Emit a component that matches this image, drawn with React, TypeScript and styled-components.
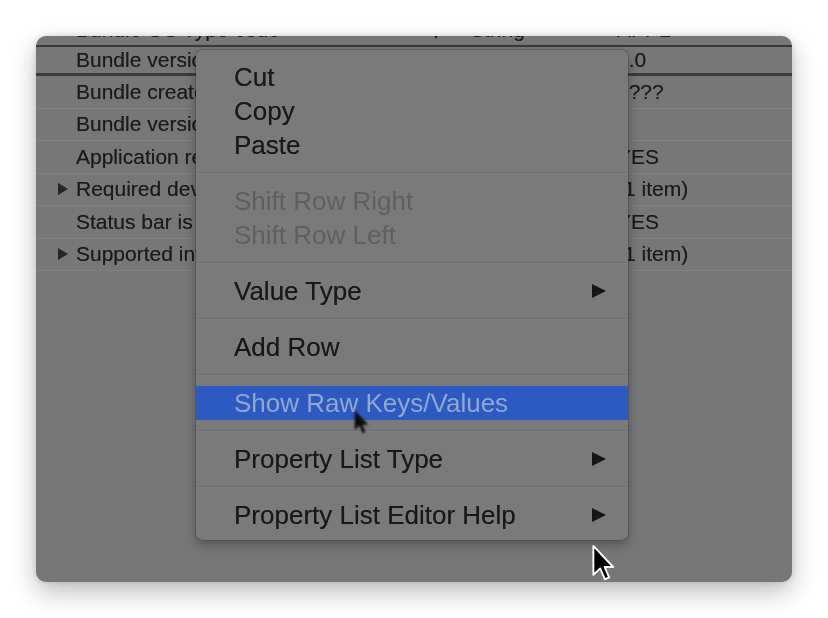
import React from "react";
import styled, { createGlobalStyle } from "styled-components";

const Global = createGlobalStyle`
  html, body { margin: 0; padding: 0; background: #ffffff; }
  body { font-family: "Liberation Sans", Arial, Helvetica, sans-serif; }
`;

const Page = styled.div`
  width: 828px;
  height: 618px;
  padding: 36px;
  box-sizing: border-box;
  background: #ffffff;
`;

const Card = styled.div`
  position: relative;
  width: 756px;
  height: 546px;
  background: #777777;
  border-radius: 10px;
  overflow: hidden;
  box-shadow: 0 10px 26px rgba(0, 0, 0, 0.26), 0 0 6px rgba(0, 0, 0, 0.12);
`;

const Table = styled.div`
  display: flex;
  flex-direction: column;
  margin-top: -21px;
  filter: blur(0.45px);
`;

type Variant = "partial" | "selected" | "normal";

const Row = styled.div<{ $variant: Variant }>`
  display: grid;
  grid-template-columns: 20px 355px 39px 147px 1fr;
  align-items: center;
  box-sizing: border-box;
  padding-left: 20px;
  font-size: 21px;
  line-height: 24px;
  color: #1a1a1a;
  text-shadow: 0 0 0.6px rgba(0, 0, 0, 0.5);
  white-space: nowrap;
  height: ${(p) => (p.$variant === "partial" ? "30px" : p.$variant === "selected" ? "31px" : "32.5px")};
  border-top: ${(p) => (p.$variant === "selected" ? "2px solid #3a3a3a" : "none")};
  border-bottom: ${(p) =>
    p.$variant === "selected" ? "3px solid #3c3c3c" : p.$variant === "normal" ? "1px solid #818181" : "none"};
`;

const Disclosure = styled.span`
  display: block;
  width: 0;
  height: 0;
  margin-left: 2px;
  border-left: 10px solid #262626;
  border-top: 6.5px solid transparent;
  border-bottom: 6.5px solid transparent;
`;

const Cell = styled.span`
  overflow: hidden;
`;

const Stepper = styled.span`
  display: flex;
  flex-direction: column;
  gap: 8px;
  margin-left: 2px;
`;

const Tri = styled.span<{ $up?: boolean }>`
  display: block;
  width: 0;
  height: 0;
  border-left: 3.5px solid transparent;
  border-right: 3.5px solid transparent;
  ${(p) => (p.$up ? "border-bottom: 5px solid #222;" : "border-top: 5px solid #222;")}
`;

const Menu = styled.div`
  position: absolute;
  left: 160px;
  top: 14px;
  width: 432px;
  box-sizing: border-box;
  padding: 10px 0 8px;
  background: #7a7a7a;
  border-radius: 7px;
  box-shadow: 0 4px 12px rgba(0, 0, 0, 0.32), 0 0 0 1px rgba(0, 0, 0, 0.14);
  font-size: 26px;
  filter: blur(0.45px);
`;

const Item = styled.div<{ $disabled?: boolean; $active?: boolean }>`
  display: flex;
  align-items: center;
  justify-content: space-between;
  height: 34px;
  padding: 0 22px 0 38px;
  white-space: nowrap;
  color: ${(p) => (p.$active ? "#91a8cc" : p.$disabled ? "#5f5f5f" : "#181818")};
  text-shadow: ${(p) => (p.$disabled || p.$active ? "none" : "0 0 0.6px rgba(0,0,0,0.5)")};
  background: ${(p) => (p.$active ? "#2d59c3" : "transparent")};
`;

const SubArrow = styled.span`
  display: block;
  width: 0;
  height: 0;
  border-left: 14px solid #161616;
  border-top: 7px solid transparent;
  border-bottom: 7px solid transparent;
`;

const Separator = styled.div`
  height: 22px;
  display: flex;
  align-items: center;
  &::after {
    content: "";
    flex: 1;
    border-top: 1px solid #6f6f6f;
    border-bottom: 1px solid #7f7f7f;
  }
`;

const Pointer = styled.svg<{ $x: number; $y: number; $blur?: number }>`
  position: absolute;
  left: ${(p) => p.$x}px;
  top: ${(p) => p.$y}px;
  filter: ${(p) => (p.$blur ? `blur(${p.$blur}px)` : "none")};
`;

type RowData = {
  key: string;
  type: string;
  value: string;
  variant: Variant;
  disclosure?: boolean;
  stepper?: boolean;
};

const rows: RowData[] = [
  { key: "Bundle OS Type code", type: "String", value: "APPL", variant: "partial", stepper: true },
  { key: "Bundle versions string, short", type: "String", value: "1.0", variant: "selected" },
  { key: "Bundle creator OS Type code", type: "String", value: "????", variant: "normal" },
  { key: "Bundle version", type: "String", value: "1", variant: "normal" },
  { key: "Application requires iPhone environment", type: "Boolean", value: "YES", variant: "normal" },
  { key: "Required device capabilities", type: "Array", value: "(1 item)", variant: "normal", disclosure: true },
  { key: "Status bar is initially hidden", type: "Boolean", value: "YES", variant: "normal" },
  { key: "Supported interface orientations", type: "Array", value: "(1 item)", variant: "normal", disclosure: true },
];

type MenuEntry =
  | { sep: true }
  | { sep?: false; label: string; disabled?: boolean; active?: boolean; sub?: boolean };

const menu: MenuEntry[] = [
  { label: "Cut" },
  { label: "Copy" },
  { label: "Paste" },
  { sep: true },
  { label: "Shift Row Right", disabled: true },
  { label: "Shift Row Left", disabled: true },
  { sep: true },
  { label: "Value Type", sub: true },
  { sep: true },
  { label: "Add Row" },
  { sep: true },
  { label: "Show Raw Keys/Values", active: true },
  { sep: true },
  { label: "Property List Type", sub: true },
  { sep: true },
  { label: "Property List Editor Help", sub: true },
];

const ArrowPath = "M1.2 1 L1.2 16.2 L4.8 12.9 L7.3 18.6 L9.5 17.6 L7.1 12.1 L11.6 12.1 Z";

export default function App() {
  return (
    <Page>
      <Global />
      <Card>
        <Table>
          {rows.map((r, i) => (
            <Row key={i} $variant={r.variant}>
              <span>{r.disclosure ? <Disclosure /> : null}</span>
              <Cell>{r.key}</Cell>
              <span>
                {r.stepper ? (
                  <Stepper>
                    <Tri $up />
                    <Tri />
                  </Stepper>
                ) : null}
              </span>
              <Cell>{r.type}</Cell>
              <Cell>{r.value}</Cell>
            </Row>
          ))}
        </Table>

        <Menu>
          {menu.map((m, i) =>
            m.sep ? (
              <Separator key={i} />
            ) : (
              <Item key={i} $disabled={m.disabled} $active={m.active}>
                <span>{m.label}</span>
                {m.sub ? <SubArrow /> : null}
              </Item>
            )
          )}
        </Menu>

        <Pointer $x={317} $y={373} $blur={1.2} width="16" height="26" viewBox="0 0 12 20">
          <path d={ArrowPath} fill="#0d0d0d" />
        </Pointer>

        <Pointer $x={555} $y={508} width="23" height="38" viewBox="0 0 12 20">
          <path d={ArrowPath} fill="#000" stroke="#fff" strokeWidth="1" strokeLinejoin="round" />
        </Pointer>
      </Card>
    </Page>
  );
}
